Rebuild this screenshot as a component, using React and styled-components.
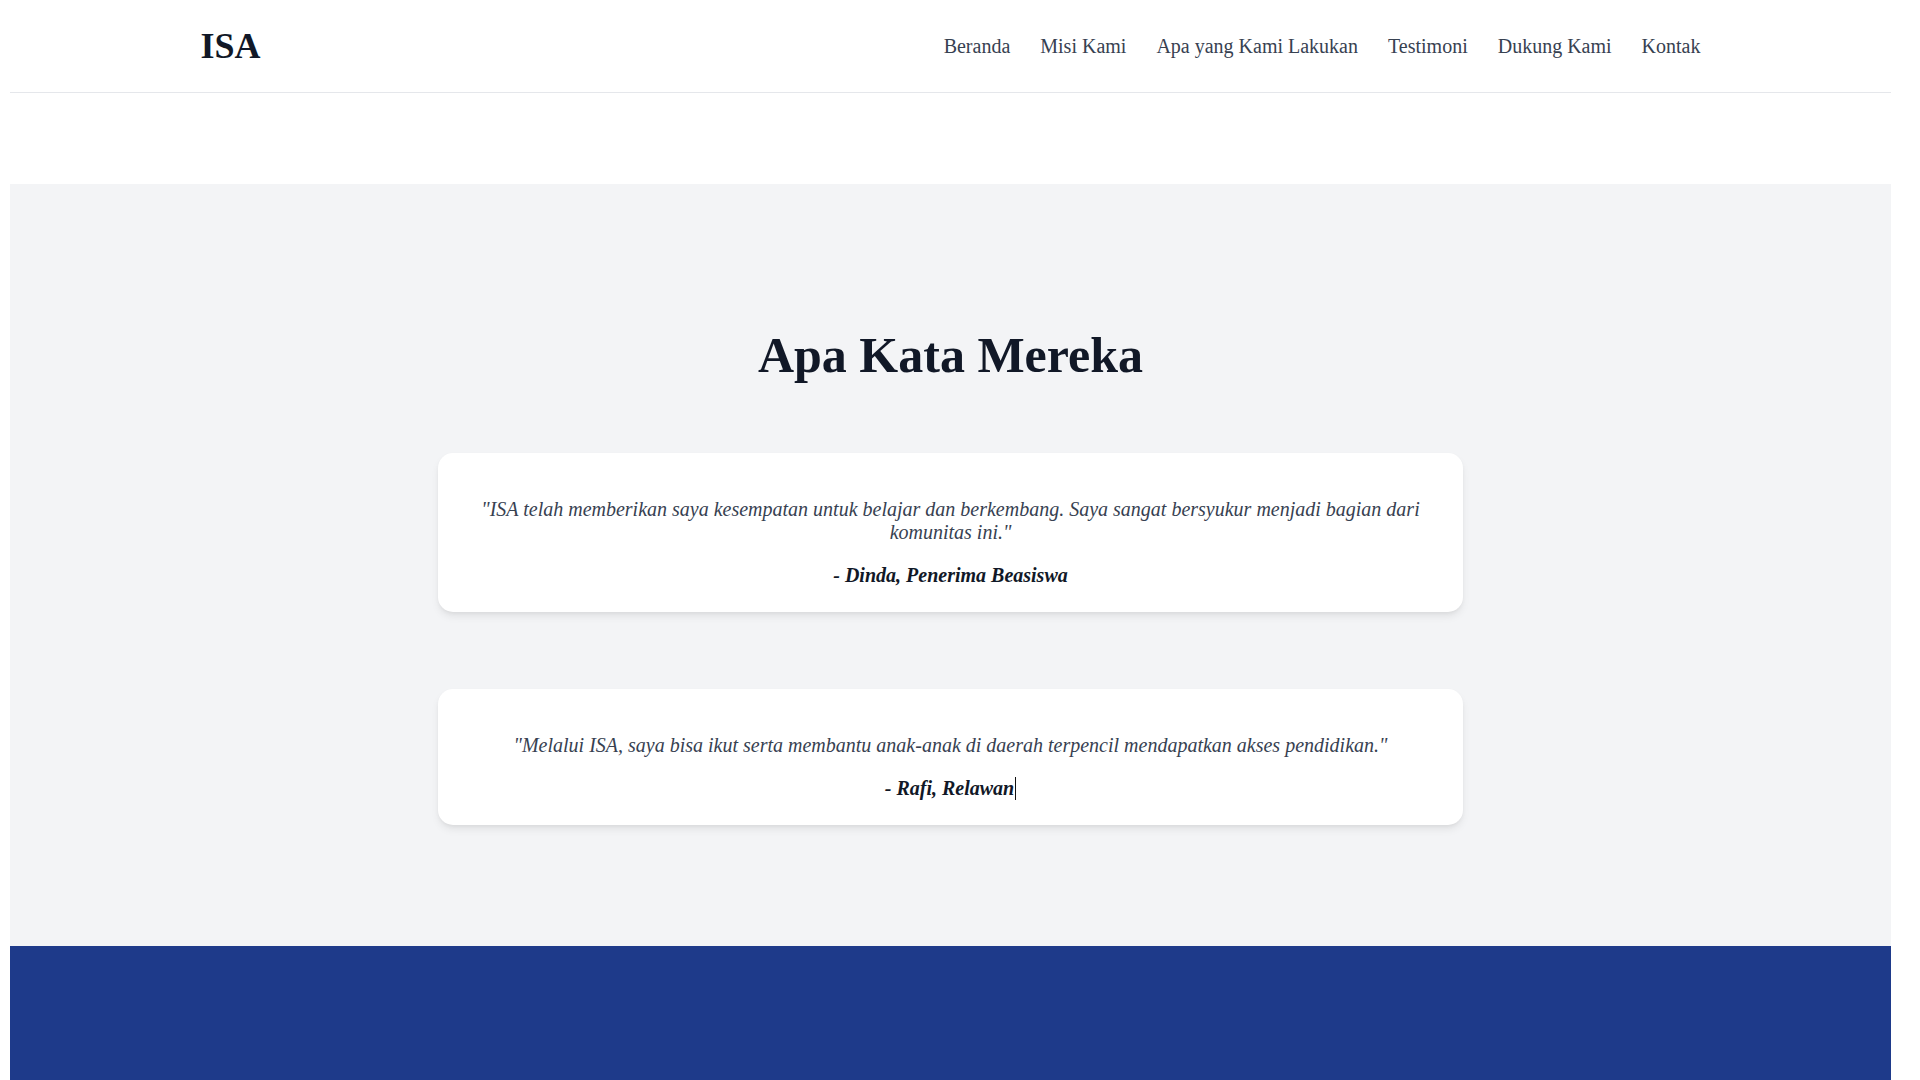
import React from "react";
import styled, { createGlobalStyle } from "styled-components";

// the reference has a 19px browser scrollbar on the right, so the body keeps that gutter
const GlobalStyle = createGlobalStyle`
  html {
    background: #ffffff;
  }

  body {
    margin: 0 29px 0 10px;
    font-family: "Liberation Serif", "Times New Roman", serif;
    color: #111827;
  }
`;

const testimonials = [
  {
    quote:
      "\"ISA telah memberikan saya kesempatan untuk belajar dan berkembang. Saya sangat bersyukur menjadi bagian dari komunitas ini.\"",
    author: "- Dinda, Penerima Beasiswa",
  },
  {
    quote:
      "\"Melalui ISA, saya bisa ikut serta membantu anak-anak di daerah terpencil mendapatkan akses pendidikan.\"",
    author: "- Rafi, Relawan",
    focused: true,
  },
];

const links = ["Beranda", "Misi Kami", "Apa yang Kami Lakukan", "Testimoni", "Dukung Kami", "Kontak"];

export default function App() {
  return (
    <>
      <GlobalStyle />
      <Header>
        <Container>
          <Logo>ISA</Logo>
          <Nav>
            {links.map((l) => (
              <NavLink key={l} href="#">
                {l}
              </NavLink>
            ))}
          </Nav>
        </Container>
      </Header>

      <Testimonials>
        <Title>Apa Kata Mereka</Title>
        <CardList>
          {testimonials.map((t) => (
            <Card key={t.author}>
              <Quote>{t.quote}</Quote>
              <Author>
                {t.author}
                {t.focused && <Caret />}
              </Author>
            </Card>
          ))}
        </CardList>
      </Testimonials>

      <Support />
    </>
  );
}

const Header = styled.header`
  background: #ffffff;
  border-bottom: 1px solid #e5e7eb;
`;

const Container = styled.div`
  max-width: 1600px;
  margin: 0 auto;
  padding: 0 50px;
  box-sizing: border-box;
  height: 92px;
  display: flex;
  align-items: center;
  justify-content: space-between;
`;

const Logo = styled.div`
  font-size: 36px;
  font-weight: bold;
  color: #111827;
`;

const Nav = styled.nav`
  display: flex;
  align-items: center;
  gap: 30px;
`;

const NavLink = styled.a`
  font-size: 20px;
  color: #374151;
  text-decoration: none;
`;

const Testimonials = styled.section`
  margin-top: 91px;
  background: #f3f4f6;
  padding: 143px 0 121px;
`;

const Title = styled.h2`
  margin: 0 0 68px;
  font-size: 50px;
  font-weight: bold;
  line-height: 57.5px;
  text-align: center;
  color: #111827;
`;

const CardList = styled.div`
  width: 1025px;
  margin: 0 auto;
  display: flex;
  flex-direction: column;
  gap: 77px;
`;

const Card = styled.div`
  background: #ffffff;
  border-radius: 15px;
  padding: 25px;
  text-align: center;
  box-shadow: 0 5px 8px -1px rgba(0, 0, 0, 0.08), 0 2px 5px -2px rgba(0, 0, 0, 0.08);
`;

const Quote = styled.p`
  margin: 20px 0;
  font-size: 20px;
  line-height: 23px;
  font-style: italic;
  color: #374151;
`;

const Author = styled.p`
  margin: 0;
  font-size: 20px;
  line-height: 23px;
  font-style: italic;
  font-weight: bold;
  color: #111827;
`;

const Caret = styled.span`
  display: inline-block;
  width: 1px;
  height: 23px;
  margin-left: 1px;
  vertical-align: top;
  background: #111111;
`;

const Support = styled.section`
  background: #1e3a8a;
  min-height: 600px;
`;
